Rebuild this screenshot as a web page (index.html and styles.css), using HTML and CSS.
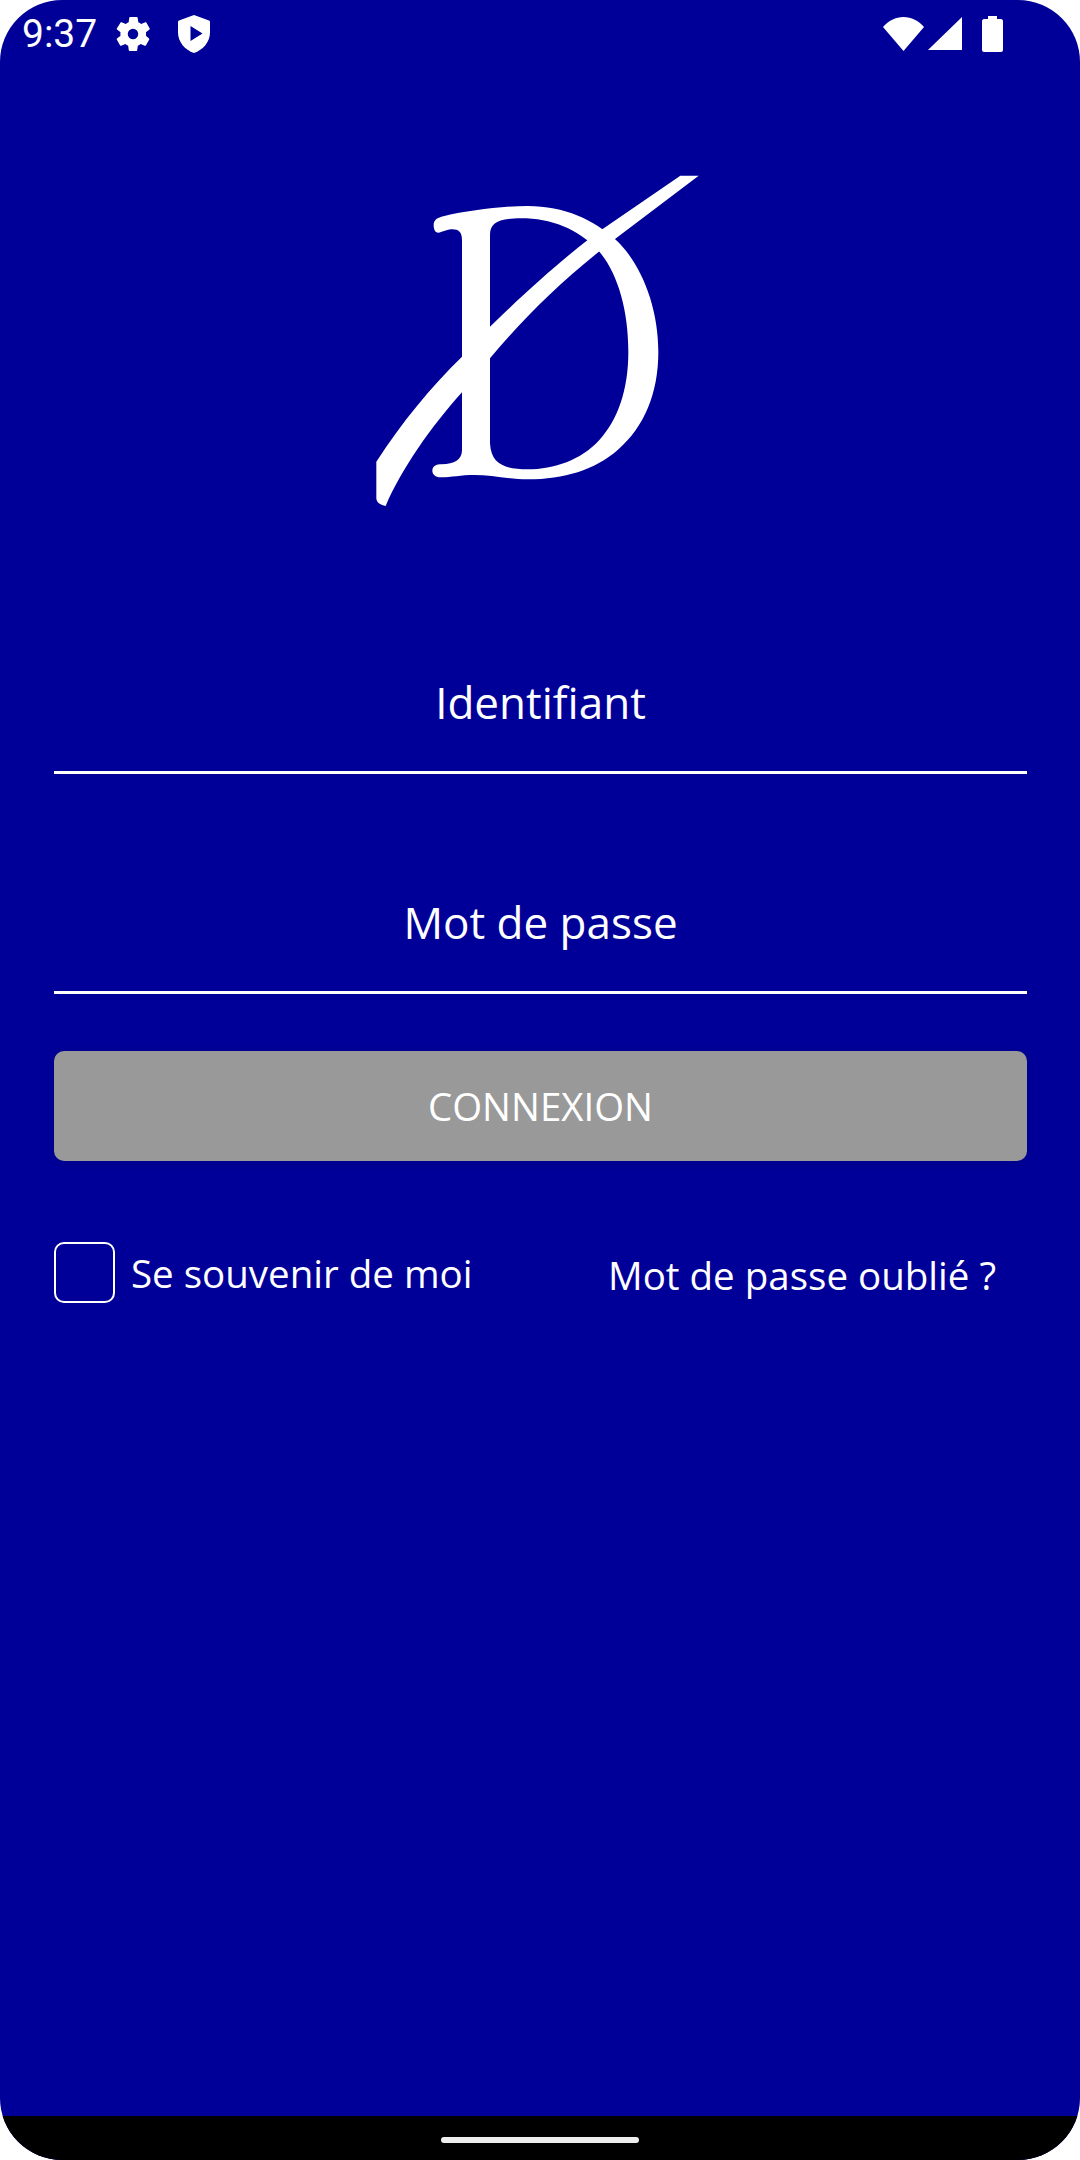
FILE: index.html
```html
<!DOCTYPE html>
<html lang="fr">
<head>
  <meta charset="UTF-8">
  <meta name="viewport" content="width=device-width, initial-scale=1.0">
  <title>Connexion</title>
  <link rel="stylesheet" href="styles.css">
</head>
<body>
  <div class="screen">
    <div class="status-bar">
      <span class="clock">9:37</span>
      <svg class="icon-gear" viewBox="0 0 24 24"><path fill="#fff" fill-rule="evenodd" d="M19.4 13c.04-.32.06-.66.06-1s-.02-.68-.07-1l2.03-1.58c.18-.14.23-.41.12-.61l-1.92-3.32c-.12-.22-.37-.29-.59-.22l-2.39.96c-.5-.38-1.03-.7-1.62-.94l-.36-2.54c-.04-.24-.24-.41-.48-.41h-3.84c-.24 0-.43.17-.47.41l-.36 2.54c-.59.24-1.13.57-1.62.94l-2.39-.96c-.22-.08-.47 0-.59.22L2.74 8.81c-.12.21-.08.47.12.61L4.89 11c-.05.32-.09.66-.09 1s.02.68.07 1l-2.03 1.58c-.18.14-.23.41-.12.61l1.92 3.32c.12.22.37.29.59.22l2.39-.96c.5.38 1.03.7 1.62.94l.36 2.54c.05.24.24.41.48.41h3.84c.24 0 .44-.17.47-.41l.36-2.54c.59-.24 1.13-.56 1.62-.94l2.39.96c.22.08.47 0 .59-.22l1.92-3.32c.12-.22.07-.47-.12-.61L19.4 13zM12 15A3 3 0 1 1 12 9a3 3 0 0 1 0 6z"/></svg>
      <svg class="icon-shield" viewBox="0 0 32 38"><path fill="#fff" fill-rule="evenodd" d="M16 0 31 5.500c.6.2 1 .8 1 1.500v10.500C32 27 25 35 16 38 7 35 0 27 0 17.500V7c0-.7.4-1.300 1-1.500zM12.500 11v15l12-7.500z"/></svg>
      <span class="status-right">
        <svg class="icon-wifi" viewBox="0 0 41 34"><path fill="#fff" d="M20.500 34 0 10C5.500 3.800 12.500 0 20.500 0S35.500 3.800 41 10z"/></svg>
        <svg class="icon-signal" viewBox="0 0 34 33"><path fill="#fff" d="M0 33 34 0v33z"/></svg>
        <svg class="icon-battery" viewBox="0 0 21 36"><path fill="#fff" d="M6 0h9v3h4c1 0 2 1 2 2v29c0 1-1 2-2 2H2c-1 0-2-1-2-2V5c0-1 1-2 2-2h4z"/></svg>
      </span>
    </div>

    <main class="login">
      <div class="logo">
        <svg viewBox="0 0 1110 1080" width="370" height="360">
          <path fill="#fff" fill-rule="evenodd" d="M248 195C248 178 262 172 280 168C350 152 450 138 530 138C640 138 730 180 795 240C870 310 922 440 922 575C922 700 880 800 800 870C730 930 640 958 530 958C480 958 420 945 370 945C330 945 300 952 270 952C252 952 244 942 244 932C244 918 256 913 272 913C310 911 333 900 333 870L333 240C333 215 322 207 300 208C285 209 272 218 262 218C252 218 248 208 248 195ZM417 225C417 190 440 175 510 175C600 175 680 205 745 275C800 340 832 450 832 575C832 690 800 780 745 840C690 900 610 928 530 928C465 928 420 915 417 850Z"/>
          <path fill="#fff" d="M988 47L1043 47L795 235C650 345 520 470 417 595L333 697C240 800 150 930 104 1038C90 1036 76 1028 76 1015L76 905C150 790 240 680 333 590L417 500C520 400 620 310 710 240L755 207Z"/>
        </svg>
      </div>

      <div class="field"><span>Identifiant</span></div>
      <div class="field"><span>Mot de passe</span></div>

      <button class="connect">CONNEXION</button>

      <div class="options">
        <label class="remember"><span class="checkbox"></span>Se souvenir de moi</label>
        <a class="forgot">Mot de passe oublié ?</a>
      </div>
    </main>

    <div class="nav-bar"><span class="home-pill"></span></div>
  </div>
</body>
</html>
```

FILE: styles.css
```css
* {
  box-sizing: border-box;
}
html, body {
  margin: 0;
  background-color: #fff;
}
body {
  font-family: "Open Sans", "Noto Sans", sans-serif;
  color: #fff;
}
.screen {
  width: 1080px;
  height: 2160px;
  display: flex;
  flex-direction: column;
  background-color: #000099;
  border-radius: 62px;
  overflow: hidden;
}
.status-bar {
  height: 64px;
  flex-shrink: 0;
  display: flex;
  align-items: center;
  padding: 3px 77px 0 22px;
}
.clock {
  font-family: Roboto, sans-serif;
  font-size: 39px;
  width: 90px;
}
.icon-gear {
  width: 42px;
  height: 42px;
}
.icon-shield {
  width: 32px;
  height: 38px;
  margin-left: 24px;
}
.status-right {
  margin-left: auto;
  display: flex;
  align-items: center;
  gap: 4px;
}
.icon-wifi {
  width: 41px;
  height: 34px;
}
.icon-signal {
  width: 34px;
  height: 33px;
}
.icon-battery {
  width: 21px;
  height: 36px;
  margin-left: 16px;
}
.login {
  flex: 1;
  display: flex;
  flex-direction: column;
  padding: 0 53px 0 54px;
}
.logo {
  height: 598px;
  padding: 96px 10px 0 0;
  display: flex;
  justify-content: center;
}
.logo svg {
  display: block;
}
.field {
  height: 112px;
  margin-bottom: 108px;
  border-bottom: 3px solid #fff;
  font-size: 44px;
  text-align: center;
  display: flex;
  justify-content: center;
  padding-top: 10px;
}
.field + .field {
  margin-bottom: 57px;
}
.connect {
  height: 110px;
  border: none;
  border-radius: 10px;
  background-color: #999;
  color: #fff;
  font: inherit;
  font-size: 38.4px;
  box-shadow: 0 2px 12px rgba(0, 0, 0, 0.12);
}
.options {
  margin-top: 81px;
  display: flex;
  justify-content: space-between;
  align-items: center;
  font-size: 38.5px;
  padding-right: 31px;
}
.remember {
  display: flex;
  align-items: center;
  gap: 16px;
}
.forgot {
  padding-top: 4px;
}
.checkbox {
  width: 61px;
  height: 61px;
  border: 2px solid #fff;
  border-radius: 10px;
}
.nav-bar {
  height: 44px;
  flex-shrink: 0;
  background-color: #000;
  display: flex;
  justify-content: center;
  padding-top: 21px;
}
.home-pill {
  width: 198px;
  height: 6px;
  border-radius: 3px;
  background-color: #eee;
}
```
